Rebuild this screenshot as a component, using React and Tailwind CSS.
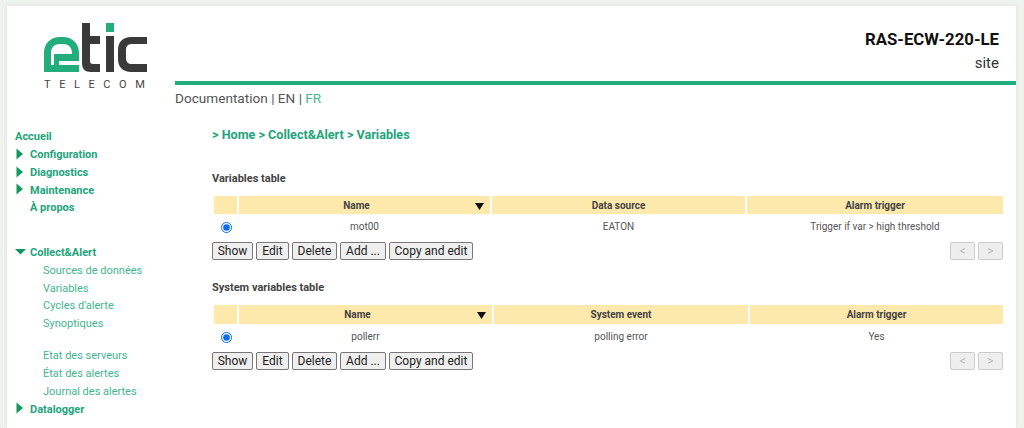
const font = "font-['Roboto',sans-serif]";
const Tri = () => <svg width="9" height="14" viewBox="0 0 9 14" className="shrink-0"><path d="M1.5 1.5 L8 7 L1.5 12.5 Z" fill="#0e9a5c"/></svg>;
const TriDown = () => <svg width="12" height="9" viewBox="0 0 12 9" className="shrink-0"><path d="M0 2 H11 L5.5 7.5 Z" fill="#0e9a5c"/></svg>;
const Logo = () => (
  <div className="flex flex-col items-start">
    <svg width="104" height="50" viewBox="0 0 104 50" className="block">
      <path fill="#22ad7c" fillRule="evenodd" d="M0 49 V30 C0 20 7 14 16 14 H19 C28 14 35 20 35 30 V38 H15 V42 H35 V49 Z M7 42 H10 V31 H28 V30 C28 24 24 21 19 21 H16 C11 21 7 24 7 30 Z" />
      <path fill="#3a3a3a" d="M38 0 H46 V13 H56 V21 H46 V38 C46 40 47 41 49 41 H56 V49 H47 C41 49 38 46 38 40 Z"/>
      <rect x="62" y="0" width="8" height="9" fill="#22ad7c"/>
      <rect x="62" y="13" width="8" height="36" fill="#3a3a3a"/>
      <path fill="#3a3a3a" d="M103 14 V21 H88 C84 21 82 23 82 27 V35 C82 39 84 41 88 41 H103 V49 H87 C79 49 74 44 74 36 V27 C74 19 79 14 87 14 Z"/>
    </svg>
    <div className="text-[11px] leading-none tracking-[0.78em] text-[#444] mt-[6px] whitespace-nowrap">TELECOM</div>
  </div>
);
const L1 = ({ icon, children }) => (
  <div className="h-[17.75px] flex items-center text-[11px] font-bold text-[#22a47a]">
    <span className="w-[15px] flex items-start -mt-[3px]">{icon}</span><span>{children}</span>
  </div>
);
const L2 = ({ children }) => <div className="h-[17.75px] flex items-center pl-[28px] text-[11px] text-[#3fb58f]">{children}</div>;
const Btn = ({ children, w }) => (
  <button className={`${w} h-[18px] border border-[#777] rounded-[2px] bg-[#efefef] text-[#222] text-[12px] leading-none`}>{children}</button>
);
const Dis = ({ children }) => (
  <button className="h-[18px] w-[25px] border border-[#ccc] rounded-[2px] bg-[#eee] text-[#bbb] text-[12px] leading-none">{children}</button>
);
const Table = ({ title, cols, row, nameW, dataW, headH, gapTop }) => (
  <section className={gapTop}>
    <h2 className="text-[11px] leading-[14px] font-bold text-[#444]">{title}</h2>
    <div className={`${headH} mt-[10px] ml-[2px] flex gap-[2px] text-[10px] font-bold text-[#444]`}>
      <div className="w-[23px] bg-[#fde9ac]" />
      <div className={`${nameW} relative bg-[#fde9ac] flex items-center justify-center pr-[16px]`}>
        {cols[0]}
        <svg width="9" height="7" viewBox="0 0 9 7" className="absolute right-[6px] top-[7px]"><path d="M0 0 H9 L4.5 7 Z" fill="#111"/></svg>
      </div>
      <div className={`${dataW} bg-[#fde9ac] flex items-center justify-center`}>{cols[1]}</div>
      <div className="flex-1 bg-[#fde9ac] flex items-center justify-center">{cols[2]}</div>
    </div>
    <div className="ml-[2px] flex gap-[2px] h-[26px] items-center text-[10px] text-[#555]">
      <div className="w-[23px] flex justify-center pl-[1px]"><input type="radio" defaultChecked className="w-[11px] h-[11px] m-0 accent-[#0b6cf0]" /></div>
      <div className={`${nameW} text-center pb-[2px]`}>{row[0]}</div>
      <div className={`${dataW} text-center pb-[2px]`}>{row[1]}</div>
      <div className="flex-1 text-center pb-[2px]">{row[2]}</div>
    </div>
    <div className="flex items-center gap-[3px] mt-[2px]">
      <Btn w="w-[41px]">Show</Btn><Btn w="w-[33px]">Edit</Btn><Btn w="w-[45px]">Delete</Btn><Btn w="w-[46px]">Add ...</Btn><Btn w="w-[84px]">Copy and edit</Btn>
      <div className="ml-auto flex gap-[3px]"><Dis>&lt;</Dis><Dis>&gt;</Dis></div>
    </div>
  </section>
);
export default function App() {
  return (
    <div className={`${font} w-[1024px] h-[428px] overflow-hidden bg-[#eef3ee] pt-[6px] pl-[7px] pr-[8px]`}>
      <div className="bg-white h-[422px] shadow-[0_0_4px_rgba(0,0,0,0.08)] flex flex-col">
        <header className="flex h-[100px] shrink-0">
          <div className="w-[168px] shrink-0 pl-[37px] pt-[17px]"><Logo /></div>
          <div className="flex-1 flex flex-col">
            <div className="h-[69px] pt-[21px] pr-[17px] text-right shrink-0">
              <div className="text-[16.75px] leading-[24px] font-bold text-[#111]">RAS-ECW-220-LE</div>
              <div className="text-[15px] leading-[24px] text-[#333]">site</div>
            </div>
            <div className="h-[4px] bg-[#22ad7c] mt-[6px] shrink-0" />
            <div className="text-[13.6px] leading-[20px] mt-[3px] text-[#555]">Documentation | EN | <span className="text-[#45b893]">FR</span></div>
          </div>
        </header>
        <div className="flex flex-1">
          <nav className="w-[193px] shrink-0 pl-[8px] pt-[22.75px]">
            <div className="h-[17.75px] flex items-center text-[11px] font-bold text-[#22a47a]">Accueil</div>
            <L1 icon={<Tri />}>Configuration</L1>
            <L1 icon={<Tri />}>Diagnostics</L1>
            <L1 icon={<Tri />}>Maintenance</L1>
            <L1>À propos</L1>
            <div className="h-[27px]" />
            <L1 icon={<TriDown />}>Collect&amp;Alert</L1>
            <L2>Sources de données</L2><L2>Variables</L2><L2>Cycles d'alerte</L2><L2>Synoptiques</L2>
            <div className="h-[14.5px]" />
            <L2>Etat des serveurs</L2><L2>État des alertes</L2><L2>Journal des alertes</L2>
            <L1 icon={<Tri />}>Datalogger</L1>
          </nav>
          <main className="w-[791px] ml-[12px] pt-[21px]">
            <div className="text-[12.6px] leading-[16px] font-bold text-[#22a47a]">&gt; Home &gt; Collect&amp;Alert &gt; Variables</div>
            <Table gapTop="mt-[29px]" headH="h-[18px]" title="Variables table" cols={["Name","Data source","Alarm trigger"]} row={["mot00","EATON","Trigger if var > high threshold"]} nameW="w-[251px]" dataW="w-[253px]" />
            <Table gapTop="mt-[21px]" headH="h-[19px]" title="System variables table" cols={["Name","System event","Alarm trigger"]} row={["pollerr","polling error","Yes"]} nameW="w-[253px]" dataW="w-[254px]" />
          </main>
        </div>
      </div>
    </div>
  );
}
